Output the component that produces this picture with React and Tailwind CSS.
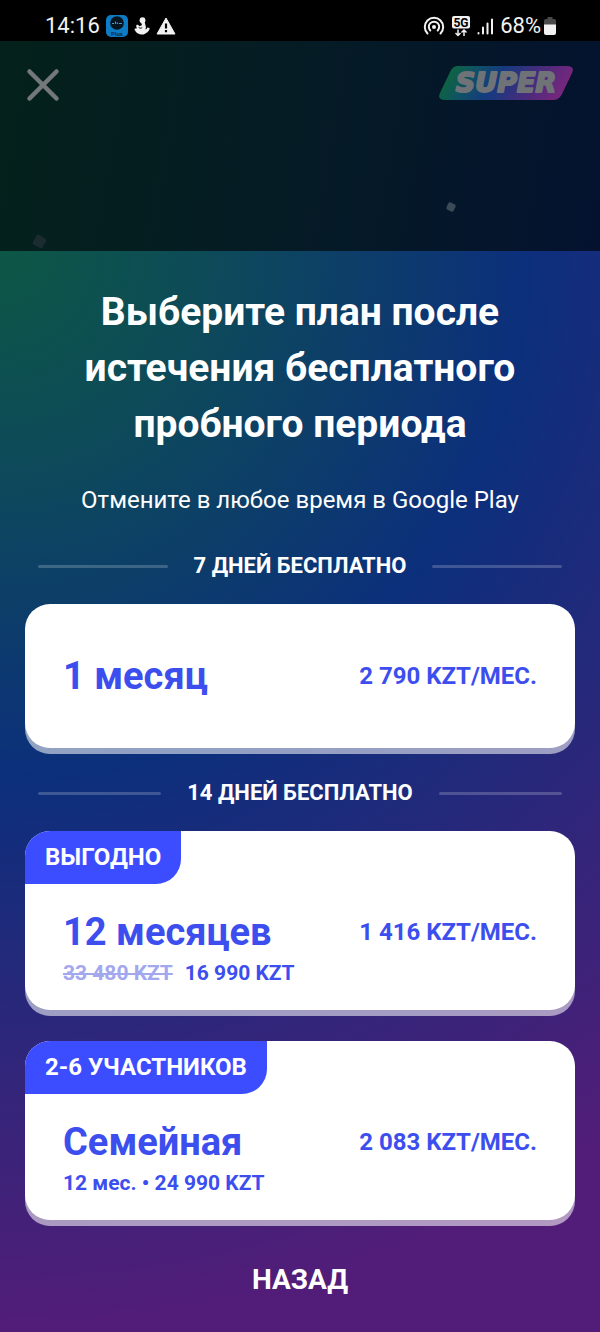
import React from 'react';

const trials = [
  {
    label: '7 ДНЕЙ БЕСПЛАТНО',
    plans: [{ id: 'month', title: '1 месяц', price: '2 790 KZT/МЕС.' }],
  },
  {
    label: '14 ДНЕЙ БЕСПЛАТНО',
    plans: [
      {
        id: 'year',
        badge: 'ВЫГОДНО',
        title: '12 месяцев',
        price: '1 416 KZT/МЕС.',
        oldTotal: '33 480 KZT',
        total: '16 990 KZT',
      },
      {
        id: 'family',
        badge: '2-6 УЧАСТНИКОВ',
        title: 'Семейная',
        price: '2 083 KZT/МЕС.',
        total: '12 мес. • 24 990 KZT',
      },
    ],
  },
];

const AppIcon = () => (
  <svg viewBox="0 0 22 22" className="w-[22px] h-[22px]">
    <rect width="22" height="22" rx="5" fill="#0e7cc4" />
    <circle cx="11" cy="8" r="6.800" fill="#06141f" />
    <path d="M6 8.500h2M9.500 6.500v2.500M11.500 7.500v1.500M13 8.500h3" stroke="#3f9bd6" strokeWidth="1.200" />
    <text x="11" y="20.500" textAnchor="middle" fontSize="6" fontWeight="700" fill="#082c55">
      Plus
    </text>
  </svg>
);

const FigureIcon = () => (
  <svg viewBox="0 0 16 18" className="w-4 h-[18px]" fill="#f2f2f2">
    <circle cx="8.500" cy="3.200" r="2.900" />
    <path d="M6.800 5h3.800l1 3.800c.6 1.200.4 2.600-.4 3.400 1 .3 1.700-.3 2.200-1.700l2.300.6c-.2 2.600-1.900 4.600-4.300 5.300-2 1.600-5.400 1.600-7.400.1C2.300 15.600.8 13.700.4 11.700l2.600-.4C2 10 2 8.700 2.700 7.800c1.200-.2 2.200.4 2.900 1.500L8 8z" />
    <path d="M4.800 10.300c.7 1.200 2.200 1.200 3.400.2" stroke="#000" strokeWidth="1" fill="none" />
  </svg>
);

const WarningIcon = () => (
  <svg viewBox="0 0 20 18" className="w-5 h-[18px]">
    <path d="M10 1 19 17H1z" fill="#f2f2f2" stroke="#f2f2f2" strokeLinejoin="round" />
    <path d="M10 6.500v5M10 13v2.200" stroke="#000" strokeWidth="2.200" />
  </svg>
);

const HotspotIcon = () => (
  <svg viewBox="0 0 22 20" className="w-[22px] h-5" fill="none" stroke="#f2f2f2" strokeWidth="2" strokeLinecap="round">
    <path d="M4.500 17.500a9.200 9.200 0 1 1 13 0" />
    <path d="M7.300 14.500a5.200 5.200 0 1 1 7.400 0" />
    <circle cx="11" cy="11" r="2" fill="#f2f2f2" stroke="none" />
  </svg>
);

const NetworkIcon = () => (
  <svg viewBox="0 0 18 21" className="w-[18px] h-[21px]">
    <rect width="18" height="12.500" rx="2" fill="#f2f2f2" />
    <text x="9" y="10.500" textAnchor="middle" fontSize="12" fontWeight="700" fill="#000">
      5G
    </text>
    <g stroke="#f2f2f2" strokeWidth="1.500" fill="none">
      <path d="M6 13.500v6M3.500 17 6 19.500 8.500 17" />
      <path d="M12 20v-6M9.500 16.500 12 14l2.500 2.500" />
    </g>
  </svg>
);

const SignalIcon = () => (
  <svg viewBox="0 0 16 17" className="w-4 h-[17px]" stroke="#f2f2f2" strokeWidth="2" strokeLinecap="round">
    <path d="M1.500 15.500v-.5M6 15.500V9.500" />
    <path d="M10.500 15.500V5.500M15 15.500V1.500" />
  </svg>
);

const BatteryIcon = () => (
  <svg viewBox="0 0 12 18" className="w-3 h-[18px]">
    <path d="M3.500 0h5v2H10a2 2 0 0 1 2 2v4H0V4a2 2 0 0 1 2-2h1.500z" fill="#4a4a4a" />
    <path d="M0 7.500h12V16a2 2 0 0 1-2 2H2a2 2 0 0 1-2-2z" fill="#f2f2f2" />
  </svg>
);

const SuperLogo = () => (
  <svg viewBox="0 0 136 36" className="w-[136px] h-9" role="img" aria-label="Super">
    <defs>
      <linearGradient id="super" x1="0" y1="0" x2="1" y2="0.150">
        <stop offset="0.050" stopColor="#0d6a33" />
        <stop offset="0.250" stopColor="#0f5560" />
        <stop offset="0.480" stopColor="#153a80" />
        <stop offset="0.800" stopColor="#4f2a7c" />
        <stop offset="1" stopColor="#74277c" />
      </linearGradient>
    </defs>
    <path
      d="M19 1H129q8 0 5 7L124 29q-3 6-9 6H7q-8 0-5-7L12 7q3-6 7-6z"
      fill="url(#super)"
    />
    <text
      x="68"
      y="27"
      textAnchor="middle"
      fontSize="27"
      fontWeight="700"
      fontStyle="italic"
      fontFamily="DejaVu Sans, sans-serif"
      fill="#6f7377"
      stroke="#6f7377"
      strokeWidth="2"
      strokeLinejoin="round"
    >
      SUPER
    </text>
  </svg>
);

const StatusBar = () => (
  <div className="h-[41px] pl-[45px] pr-11 pt-[11px] flex items-center justify-between bg-black text-[#f2f2f2] text-[22px] leading-8">
    <div className="flex items-center gap-[6px]">
      <span>14:16</span>
      <AppIcon />
      <FigureIcon />
      <WarningIcon />
    </div>
    <div className="flex items-center gap-[7px]">
      <HotspotIcon />
      <NetworkIcon />
      <SignalIcon />
      <div className="flex items-center gap-[3px]">
        <span>68%</span>
        <BatteryIcon />
      </div>
    </div>
  </div>
);

const TrialDivider = ({ label }) => (
  <div className="px-[13px] flex items-center gap-[26px]">
    <span className="h-[3px] flex-1 rounded-full bg-white/20" />
    <h2 className="text-[22px] leading-7 font-bold">{label}</h2>
    <span className="h-[3px] flex-1 rounded-full bg-white/20" />
  </div>
);

const PlanCard = ({ plan }) => {
  const { badge, title, price, oldTotal, total } = plan;

  return (
    <button
      type="button"
      className="block w-full overflow-hidden rounded-[25px] bg-white text-left text-[#3d4eee] shadow-[0_6px_0_rgba(255,255,255,0.55)]"
    >
      {badge && (
        <span className="block w-fit rounded-br-[25px] bg-[#3c4dff] px-5 py-3 text-2xl leading-[29px] font-bold text-white">
          {badge}
        </span>
      )}
      <div className={badge ? 'px-[38px] pt-7 pb-[23px]' : 'px-[38px] py-[52px]'}>
        <div className="flex items-center justify-between">
          <span className="text-[38px] leading-10 font-bold">{title}</span>
          <span className="text-2xl leading-7 font-bold">{price}</span>
        </div>
        {total && (
          <div className="mt-[7px] flex gap-3 text-[21px] leading-7 font-bold">
            {oldTotal && <s className="text-[#a3a8ee]">{oldTotal}</s>}
            <span>{total}</span>
          </div>
        )}
      </div>
    </button>
  );
};

const App = () => (
  <div className="min-h-screen flex flex-col bg-black font-['Roboto',sans-serif] text-white">
    <StatusBar />

    {/* Dimmed screen behind the sheet */}
    <header className="relative h-[210px] px-[26px] pt-6 flex items-start justify-between bg-[linear-gradient(100deg,#04211b,#051c24_45%,#04122f)]">
      <button type="button" aria-label="Закрыть" className="mt-[3px]">
        <svg viewBox="0 0 34 34" className="w-[34px] h-[34px]" stroke="#74787b" strokeWidth="4.500" strokeLinecap="round">
          <path d="M3.500 3.500 30.500 30.500M30.500 3.500 3.500 30.500" />
        </svg>
      </button>
      <SuperLogo />
      <span className="absolute left-[447px] top-[162px] size-2 rotate-[25deg] rounded-xs bg-[#3b4a58]" />
      <span className="absolute left-[34px] top-[195px] size-[11px] rotate-[30deg] rounded-xs bg-[#1b2c30]" />
    </header>

    {/* Plan sheet */}
    <main className="flex-1 px-[25px] pt-[33px] pb-[34px] bg-[radial-gradient(circle_at_top_left,#0d5745_0px,#0d4b58_200px,#0c2f7c_530px,#521d78_1080px)]">
      <h1 className="mx-auto max-w-[460px] text-center text-[39px] leading-[56px] font-bold">
        Выберите план после истечения бесплатного пробного периода
      </h1>
      <p className="mt-8 text-center text-2xl leading-8">Отмените в любое время в Google Play</p>

      <div className="mt-9 space-y-[31px]">
        {trials.map((trial) => (
          <section key={trial.label}>
            <TrialDivider label={trial.label} />
            <div className="mt-6 space-y-[31px]">
              {trial.plans.map((plan) => (
                <PlanCard key={plan.id} plan={plan} />
              ))}
            </div>
          </section>
        ))}
      </div>

      <button type="button" className="mt-[42px] mx-auto block text-[28px] leading-9 font-bold">
        НАЗАД
      </button>
    </main>
  </div>
);

export default App;
